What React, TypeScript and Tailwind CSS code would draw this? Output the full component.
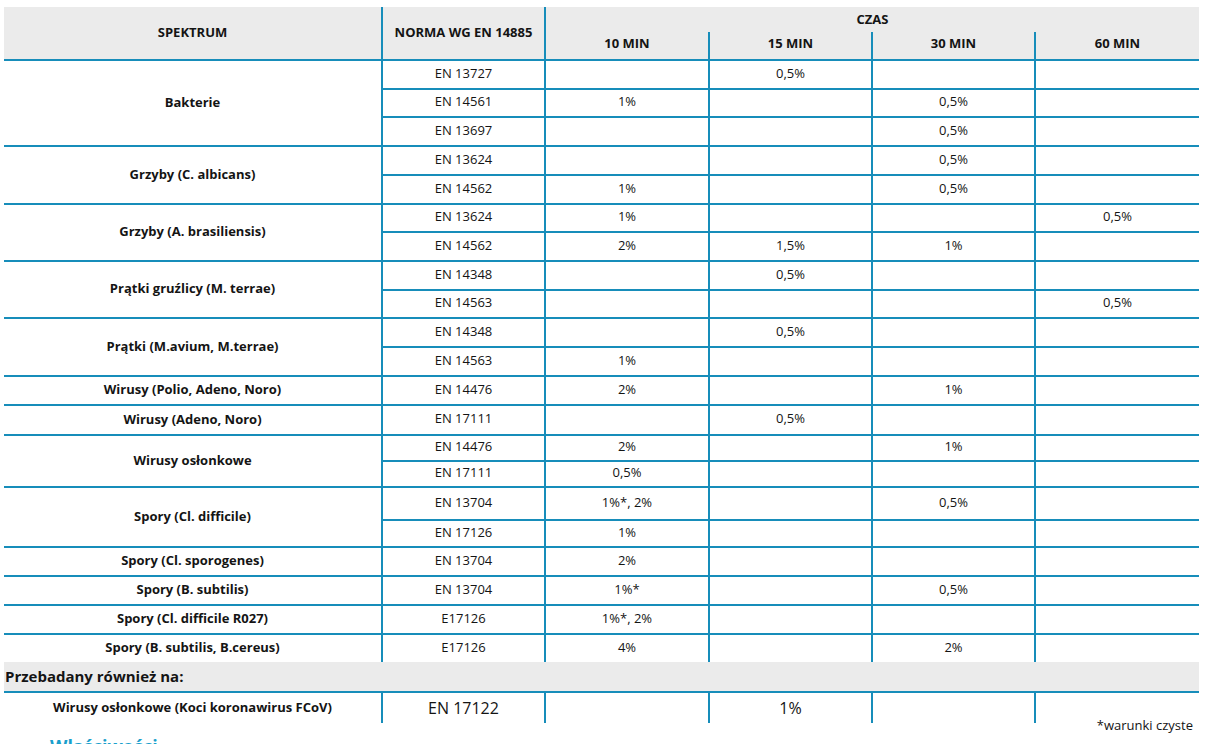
import React from "react";

type Row = { norma: string; v: [string, string, string, string] };
type Group = { label: string; rows: Row[] };

const groups: Group[] = [
  {
    label: "Bakterie",
    rows: [
      { norma: "EN 13727", v: ["", "0,5%", "", ""] },
      { norma: "EN 14561", v: ["1%", "", "0,5%", ""] },
      { norma: "EN 13697", v: ["", "", "0,5%", ""] },
    ],
  },
  {
    label: "Grzyby (C. albicans)",
    rows: [
      { norma: "EN 13624", v: ["", "", "0,5%", ""] },
      { norma: "EN 14562", v: ["1%", "", "0,5%", ""] },
    ],
  },
  {
    label: "Grzyby (A. brasiliensis)",
    rows: [
      { norma: "EN 13624", v: ["1%", "", "", "0,5%"] },
      { norma: "EN 14562", v: ["2%", "1,5%", "1%", ""] },
    ],
  },
  {
    label: "Prątki gruźlicy (M. terrae)",
    rows: [
      { norma: "EN 14348", v: ["", "0,5%", "", ""] },
      { norma: "EN 14563", v: ["", "", "", "0,5%"] },
    ],
  },
  {
    label: "Prątki (M.avium, M.terrae)",
    rows: [
      { norma: "EN 14348", v: ["", "0,5%", "", ""] },
      { norma: "EN 14563", v: ["1%", "", "", ""] },
    ],
  },
  {
    label: "Wirusy (Polio, Adeno, Noro)",
    rows: [{ norma: "EN 14476", v: ["2%", "", "1%", ""] }],
  },
  {
    label: "Wirusy (Adeno, Noro)",
    rows: [{ norma: "EN 17111", v: ["", "0,5%", "", ""] }],
  },
  {
    label: "Wirusy osłonkowe",
    rows: [
      { norma: "EN 14476", v: ["2%", "", "1%", ""] },
      { norma: "EN 17111", v: ["0,5%", "", "", ""] },
    ],
  },
  {
    label: "Spory (Cl. difficile)",
    rows: [
      { norma: "EN 13704", v: ["1%*, 2%", "", "0,5%", ""] },
      { norma: "EN 17126", v: ["1%", "", "", ""] },
    ],
  },
  {
    label: "Spory (Cl. sporogenes)",
    rows: [{ norma: "EN 13704", v: ["2%", "", "", ""] }],
  },
  {
    label: "Spory (B. subtilis)",
    rows: [{ norma: "EN 13704", v: ["1%*", "", "0,5%", ""] }],
  },
  {
    label: "Spory (Cl. difficile R027)",
    rows: [{ norma: "E17126", v: ["1%*, 2%", "", "", ""] }],
  },
  {
    label: "Spory (B. subtilis, B.cereus)",
    rows: [{ norma: "E17126", v: ["4%", "", "2%", ""] }],
  },
];

const spanClass: Record<number, string> = {
  1: "row-span-1",
  2: "row-span-2",
  3: "row-span-3",
};

function DataCell({ children }: { children?: React.ReactNode }) {
  return (
    <div className="flex items-center justify-center border-t-2 border-l-2 border-[#178dba] text-[13px] pb-[2px]">
      {children}
    </div>
  );
}

export default function App() {
  return (
    <div
      className="w-[1209px] h-[744px] overflow-hidden bg-white text-[#141414]"
      style={{ fontFamily: '"Open Sans", "Liberation Sans", sans-serif' }}
    >
      <div className="pt-[7px] pl-[4px]">
        <div className="grid w-[1195px] grid-cols-[377px_163px_164px_163px_163px_165px] grid-rows-[25px_27px_29px_28px_29px_29px_29px_28px_29px_29px_28px_29px_29px_29px_30px_26px_26px_33px_27px_29px_29px_29px_29px_29px_32px]">
          {/* header */}
          <div className="row-span-2 flex items-center justify-center bg-[#ebebeb] text-[13px] font-bold">
            SPEKTRUM
          </div>
          <div className="row-span-2 flex items-center justify-center bg-[#ebebeb] border-l-2 border-[#178dba] text-[13px] font-bold">
            NORMA WG EN 14885
          </div>
          <div className="col-span-4 flex items-center justify-center bg-[#ebebeb] border-l-2 border-[#178dba] text-[13px] font-bold pt-[1px]">
            CZAS
          </div>
          {["10 MIN", "15 MIN", "30 MIN", "60 MIN"].map((t) => (
            <div
              key={t}
              className="flex items-center justify-center bg-[#ebebeb] border-l-2 border-[#178dba] text-[13px] font-bold pb-[3px]"
            >
              {t}
            </div>
          ))}

          {/* body */}
          {groups.map((g) => (
            <React.Fragment key={g.label}>
              <div
                className={`${spanClass[g.rows.length]} flex items-center justify-center border-t-2 border-[#178dba] text-[13px] font-bold pb-[1px]`}
              >
                {g.label}
              </div>
              {g.rows.map((r, i) => (
                <React.Fragment key={i}>
                  <DataCell>{r.norma}</DataCell>
                  {r.v.map((val, j) => (
                    <DataCell key={j}>{val}</DataCell>
                  ))}
                </React.Fragment>
              ))}
            </React.Fragment>
          ))}

          {/* przebadany */}
          <div className="col-span-6 flex items-center bg-[#ebebeb] pl-[1px] text-[15px] font-bold">
            Przebadany również na:
          </div>

          <div className="flex items-center justify-center border-t-2 border-[#178dba] text-[13px] font-bold">
            Wirusy osłonkowe (Koci koronawirus FCoV)
          </div>
          <div className="flex items-center justify-center border-t-2 border-l-2 border-[#178dba] text-[16px]">
            EN 17122
          </div>
          <div className="border-t-2 border-l-2 border-[#178dba]" />
          <div className="flex items-center justify-center border-t-2 border-l-2 border-[#178dba] text-[16px]">
            1%
          </div>
          <div className="border-t-2 border-l-2 border-[#178dba]" />
          <div className="border-t-2 border-l-2 border-[#178dba]" />
        </div>

        <div className="w-[1195px] -mt-[7px] pr-[6px] text-right text-[13px] leading-[18px]">
          *warunki czyste
        </div>
        <div className="pl-[46px] text-[18px] font-bold leading-[24px] text-[#1a9fcc]">
          Właściwości
        </div>
      </div>
    </div>
  );
}
